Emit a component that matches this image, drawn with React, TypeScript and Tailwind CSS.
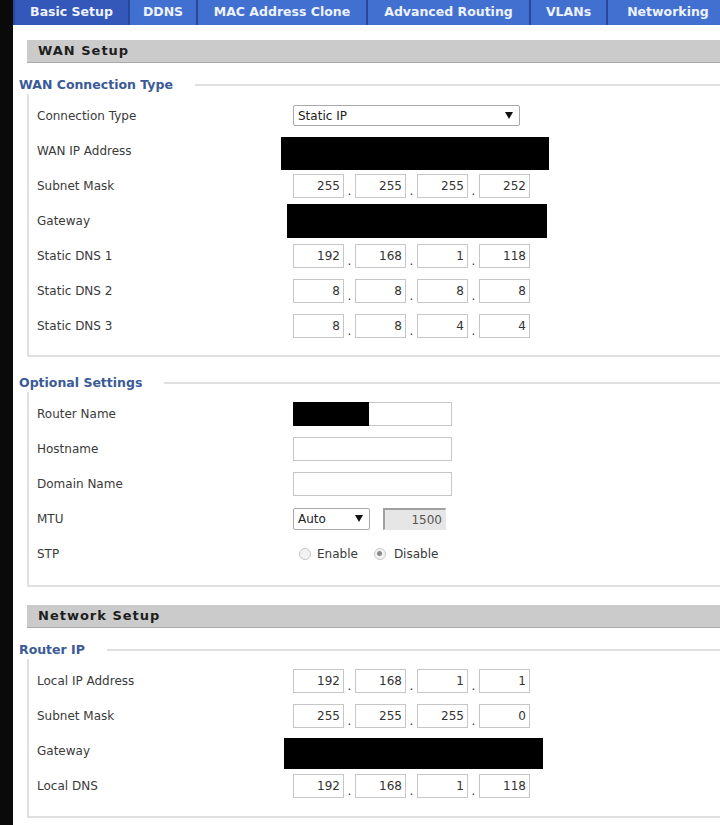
import React from "react";

const Label = ({ children }: { children: React.ReactNode }) => (
  <div className="w-[256px] shrink-0 text-[12px] text-[#3a3a3a]">{children}</div>
);

const Row = ({ label, children }: { label: string; children?: React.ReactNode }) => (
  <div className="flex h-[35px] items-center">
    <Label>{label}</Label>
    {children}
  </div>
);

const Ip = ({ v }: { v: string[] }) => (
  <div className="flex items-center">
    {v.map((x, i) => (
      <React.Fragment key={i}>
        <div className="w-[51px] h-[24px] border border-[#c6c6c6] bg-white text-right pr-[3px] text-[12px] leading-[22px] text-[#333]">
          {x}
        </div>
        {i < 3 && <div className="w-[11px] text-center text-[12px] leading-none pt-[10px] text-[#333]">.</div>}
      </React.Fragment>
    ))}
  </div>
);

const Arrow = () => (
  <svg width="8" height="7" viewBox="0 0 8 7" className="shrink-0">
    <path d="M0 0 H8 L4 7 Z" fill="#111" />
  </svg>
);

const HeaderBar = ({ title }: { title: string }) => (
  <div className="ml-[14px] h-[23px] bg-[#cbcbcb] border-b border-[#a9a9a9] flex items-center pl-[11px]">
    <span className="text-[13px] font-bold tracking-[1px] text-[#1e1e1e]">{title}</span>
  </div>
);

const Legend = ({ title }: { title: string }) => (
  <div className="flex items-center h-[18px] ml-[6px]">
    <span className="text-[12.5px] font-bold text-[#3b5a97] whitespace-nowrap">{title}</span>
    <div className="flex-1 ml-[22px] h-[2px] bg-[#e0e0e0]" />
  </div>
);

const Box = ({ children, pb }: { children: React.ReactNode; pb: string }) => (
  <div className={`ml-[14px] border-l-2 border-b-2 border-[#e0e0e0] pl-[8px] pt-[4px] ${pb}`}>{children}</div>
);

const Radio = ({ checked }: { checked?: boolean }) => (
  <div className="w-[12px] h-[12px] rounded-full border border-[#c8c8c8] bg-[#f2f2f2] flex items-center justify-center">
    {checked && <div className="w-[5px] h-[5px] rounded-full bg-[#8a8a8a]" />}
  </div>
);

export default function App() {
  const tabs = [
    { t: "Basic Setup", w: "w-[113px]", sel: true },
    { t: "DDNS", w: "w-[66px]" },
    { t: "MAC Address Clone", w: "w-[168px]" },
    { t: "Advanced Routing", w: "w-[161px]" },
    { t: "VLANs", w: "w-[75px]" },
    { t: "Networking", w: "w-[120px]" },
  ];
  return (
    <div className="w-[720px] h-[825px] bg-black flex overflow-hidden font-['DejaVu_Sans',sans-serif]">
      <div className="w-[13px] shrink-0 bg-[#0a0a0a]" />
      <div className="flex-1 bg-white flex flex-col overflow-hidden">
        <div className="h-[25px] flex bg-[#28489c] gap-[2px] shrink-0">
          <div className="w-[5px] bg-[#3f6bcf]" />
          {tabs.map((t) => (
            <div
              key={t.t}
              className={`${t.w} shrink-0 flex items-center justify-center text-[12.5px] font-bold text-[#eef2ff] whitespace-nowrap ${
                t.sel ? "bg-[#3358b9]" : "bg-[#4170d1]"
              }`}
            >
              {t.t}
            </div>
          ))}
        </div>

        <div className="mt-[15px]">
          <HeaderBar title="WAN Setup" />
        </div>

        <div className="mt-[13px]">
          <Legend title="WAN Connection Type" />
          <Box pb="pb-[12px]">
            <Row label="Connection Type">
              <div className="w-[227px] h-[21px] border border-[#a8a8a8] rounded-[2px] flex items-center justify-between pl-[4px] pr-[6px] text-[12px] text-[#222]">
                <span>Static IP</span>
                <Arrow />
              </div>
            </Row>
            <Row label="WAN IP Address">
              <div className="ml-[-12px] mt-[5px] w-[268px] h-[33px] bg-black" />
            </Row>
            <Row label="Subnet Mask">
              <Ip v={["255", "255", "255", "252"]} />
            </Row>
            <Row label="Gateway">
              <div className="ml-[-6px] w-[260px] h-[34px] bg-black" />
            </Row>
            <Row label="Static DNS 1">
              <Ip v={["192", "168", "1", "118"]} />
            </Row>
            <Row label="Static DNS 2">
              <Ip v={["8", "8", "8", "8"]} />
            </Row>
            <Row label="Static DNS 3">
              <Ip v={["8", "8", "4", "4"]} />
            </Row>
          </Box>
        </div>

        <div className="mt-[17px]">
          <Legend title="Optional Settings" />
          <Box pb="pb-[14px]">
            <Row label="Router Name">
              <div className="w-[159px] h-[24px] border border-[#c6c6c6] bg-white flex">
                <div className="w-[76px] h-[24px] -mt-px -ml-px bg-black" />
              </div>
            </Row>
            <Row label="Hostname">
              <div className="w-[159px] h-[24px] border border-[#c6c6c6] bg-white" />
            </Row>
            <Row label="Domain Name">
              <div className="w-[159px] h-[24px] border border-[#c6c6c6] bg-white" />
            </Row>
            <Row label="MTU">
              <div className="flex items-center">
                <div className="w-[77px] h-[22px] border border-[#a8a8a8] rounded-[2px] flex items-center justify-between pl-[4px] pr-[6px] text-[12px] text-[#222]">
                  <span>Auto</span>
                  <Arrow />
                </div>
                <div className="ml-[13px] w-[63px] h-[22px] border-t-2 border-l-2 border-t-[#a0a0a0] border-l-[#a0a0a0] border-b border-r border-b-[#e6e6e6] border-r-[#e6e6e6] bg-[#e6e6e6] text-right pr-[3px] text-[12px] leading-[20px] text-[#555]">
                  1500
                </div>
              </div>
            </Row>
            <Row label="STP">
              <div className="flex items-center text-[12px] text-[#3a3a3a] ml-[6px]">
                <Radio />
                <span className="ml-[6px]">Enable</span>
                <div className="ml-[16px]">
                  <Radio checked />
                </div>
                <span className="ml-[8px]">Disable</span>
              </div>
            </Row>
          </Box>
        </div>

        <div className="mt-[18px]">
          <HeaderBar title="Network Setup" />
        </div>

        <div className="mt-[13px]">
          <Legend title="Router IP" />
          <Box pb="pb-[13px]">
            <Row label="Local IP Address">
              <Ip v={["192", "168", "1", "1"]} />
            </Row>
            <Row label="Subnet Mask">
              <Ip v={["255", "255", "255", "0"]} />
            </Row>
            <Row label="Gateway">
              <div className="ml-[-9px] mt-[5px] w-[259px] h-[31px] bg-black" />
            </Row>
            <Row label="Local DNS">
              <Ip v={["192", "168", "1", "118"]} />
            </Row>
          </Box>
        </div>
      </div>
    </div>
  );
}
